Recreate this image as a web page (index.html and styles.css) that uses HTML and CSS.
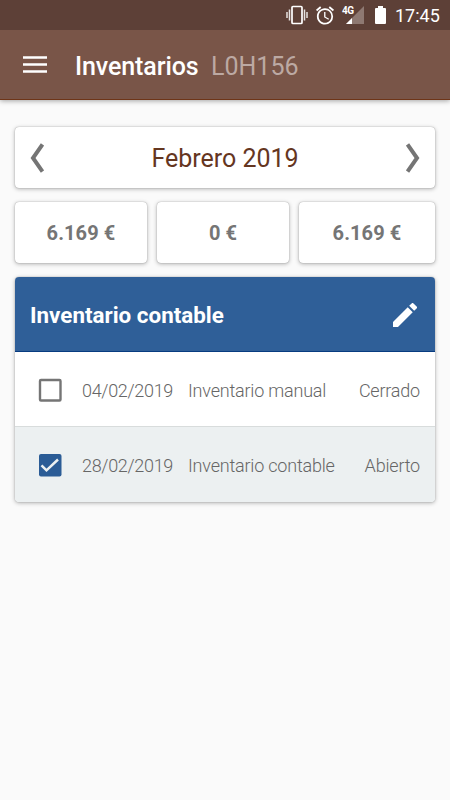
FILE: index.html
```html
<!DOCTYPE html>
<html lang="es">
<head>
<meta charset="utf-8">
<meta name="viewport" content="width=device-width, initial-scale=1">
<title>Inventarios</title>
<link rel="stylesheet" href="styles.css">
</head>
<body>
<div class="status">
  <svg class="vibrate" viewBox="0 0 22 20" width="22" height="20"><rect x="6" y="1.5" width="10" height="17" rx="1" fill="none" stroke="#fff" stroke-width="1.7"/><path d="M3.500 4.500v11M18.500 4.500v11M1 7v6M21 7v6" stroke="#fff" stroke-width="1.500" opacity=".85"/></svg>
  <svg class="alarm" viewBox="2 2 20 20" width="18" height="19"><path fill="#fff" d="M22 5.720l-4.600-3.860-1.290 1.530 4.600 3.860L22 5.720zM7.880 3.390L6.600 1.860 2 5.710l1.290 1.530 4.590-3.850zM12.500 8H11v6l4.750 2.850.75-1.230-4-2.370V8zM12 4c-4.970 0-9 4.030-9 9s4.020 9 9 9a9 9 0 0 0 0-18zm0 16c-3.870 0-7-3.130-7-7s3.130-7 7-7 7 3.130 7 7-3.130 7-7 7z"/></svg>
  <span class="network"><span class="network-type">4G</span><svg viewBox="0 0 18 18" width="18" height="18"><path fill="#8e7972" d="M0 18L18 0v18z"/><path fill="#fff" d="M0 18l6-6v6z"/></svg></span>
  <svg class="battery" viewBox="0 0 11 18" width="11" height="18"><path fill="#fff" d="M3 0h5v2h2q1 0 1 1v14q0 1-1 1H1q-1 0-1-1V3q0-1 1-1h2z"/></svg>
  <span class="time">17:45</span>
</div>
<header class="toolbar">
  <svg class="menu" viewBox="0 0 24 17" width="24" height="17"><path d="M0 1.500h24M0 8.500h24M0 15.500h24" stroke="#fff" stroke-width="2.500"/></svg>
  <h1 class="title">Inventarios</h1>
  <span class="code">L0H156</span>
</header>
<main class="content">
  <section class="card month">
    <svg viewBox="0 0 14 30" width="14" height="30"><path d="M12.500 1.500L3 15l9.500 13.500" fill="none" stroke="#757575" stroke-width="4"/></svg>
    <span class="month-name">Febrero 2019</span>
    <svg viewBox="0 0 14 30" width="14" height="30"><path d="M1.500 1.500L11 15 1.500 28.500" fill="none" stroke="#757575" stroke-width="4"/></svg>
  </section>
  <section class="totals">
    <div class="card total">6.169 €</div>
    <div class="card total">0 €</div>
    <div class="card total">6.169 €</div>
  </section>
  <section class="card inventory">
    <div class="inventory-head">
      <h2 class="inventory-title">Inventario contable</h2>
      <svg viewBox="3 3 18 18" width="24" height="24"><path fill="#fff" d="M3 17.250V21h3.750L17.810 9.940l-3.750-3.750L3 17.250zM20.710 7.040a1 1 0 0 0 0-1.410l-2.340-2.340a1 1 0 0 0-1.410 0l-1.830 1.830 3.750 3.750 1.830-1.830z"/></svg>
    </div>
    <div class="row">
      <svg class="check" viewBox="0 0 24 24" width="24" height="24"><rect x="2" y="2" width="20.500" height="20.500" rx="1" fill="none" stroke="#757575" stroke-width="2.400"/></svg>
      <span class="date">04/02/2019</span><span class="name">Inventario manual</span><span class="state">Cerrado</span>
    </div>
    <div class="row selected">
      <svg class="check" viewBox="0 0 24 24" width="24" height="24"><rect x="1" y="1" width="22.500" height="22.500" rx="2" fill="#2b5c96"/><path d="M3.500 12.300l5 5L20 6.500" fill="none" stroke="#ecf0f1" stroke-width="2.500"/></svg>
      <span class="date">28/02/2019</span><span class="name">Inventario contable</span><span class="state">Abierto</span>
    </div>
  </section>
</main>
</body>
</html>
```

FILE: styles.css
```css
* { box-sizing: border-box; }
body { margin: 0; height: 800px; background: #fafafa; font-family: Roboto, sans-serif; overflow: hidden; }
svg { display: block; flex: none; }
h1, h2 { margin: 0; }

.status { height: 30px; background: #5d4037; color: #fff; display: flex; align-items: center; justify-content: flex-end; padding-right: 10px; }
.alarm { margin-left: 8px; }
.network { display: flex; width: 23px; height: 18px; margin-left: 7px; justify-content: flex-end; position: relative; }
.network-type { position: absolute; left: 1px; top: -1px; font-size: 10px; line-height: 12px; font-weight: 700; letter-spacing: -.5px; }
.battery { margin-left: 11px; }
.time { width: 45px; margin-left: 9px; padding-top: 2px; font-size: 18px; line-height: 28px; white-space: nowrap; }

.toolbar { height: 70px; background: #795548; border-bottom: 1px solid #6e3518; display: flex; align-items: center; padding: 5px 0 0 23px; box-shadow: 0 1px 5px rgba(0,0,0,.35); position: relative; clip-path: inset(0 0 -10px 0); }
.menu { margin-top: -5px; }
.title { margin-left: 28px; width: 136px; font-size: 25px; font-weight: 500; line-height: 30px; letter-spacing: -.1px; color: #fff; white-space: nowrap; }
.code { font-size: 25px; line-height: 30px; color: #bca9a3; }

.content { padding: 27px 15px 0; }
.card { background: #fff; border-radius: 4px; box-shadow: 0 0 1px rgba(0,0,0,.4), 0 1px 4px rgba(0,0,0,.3); }
.month { height: 61px; display: flex; align-items: center; justify-content: space-between; padding: 0 15px; }
.month-name { font-size: 25px; line-height: 30px; padding-top: 2px; color: #65361f; }
.totals { display: grid; grid-template-columns: 132px 132px 136px; justify-content: space-between; margin-top: 14px; }
.total { height: 61px; display: flex; align-items: center; justify-content: center; padding: 1px 0 0; font-size: 20px; font-weight: 700; letter-spacing: .1px; color: #757575; }
.inventory { margin-top: 14px; overflow: hidden; }
.inventory-head { height: 75px; background: #2f5f98; border-bottom: 1px solid #073b80; color: #fff; display: flex; align-items: center; justify-content: space-between; padding: 2px 18px 0 15px; }
.inventory-title { font-size: 22.400px; font-weight: 700; padding-bottom: 1px; white-space: nowrap; }
.row { height: 74px; display: flex; align-items: center; padding: 1px 15px 0 23px; font-size: 18px; font-weight: 300; letter-spacing: -.2px; color: #666; white-space: nowrap; }
.row.selected { height: 76px; background: #ecf0f1; border-top: 1px solid #d8dcdc; }
.date { width: 106px; margin-left: 20px; letter-spacing: -.32px; }
.state { margin-left: auto; }
.date, .name, .state { padding-top: 1px; }
.selected .date, .selected .name, .selected .state { padding-top: 0; }
```
